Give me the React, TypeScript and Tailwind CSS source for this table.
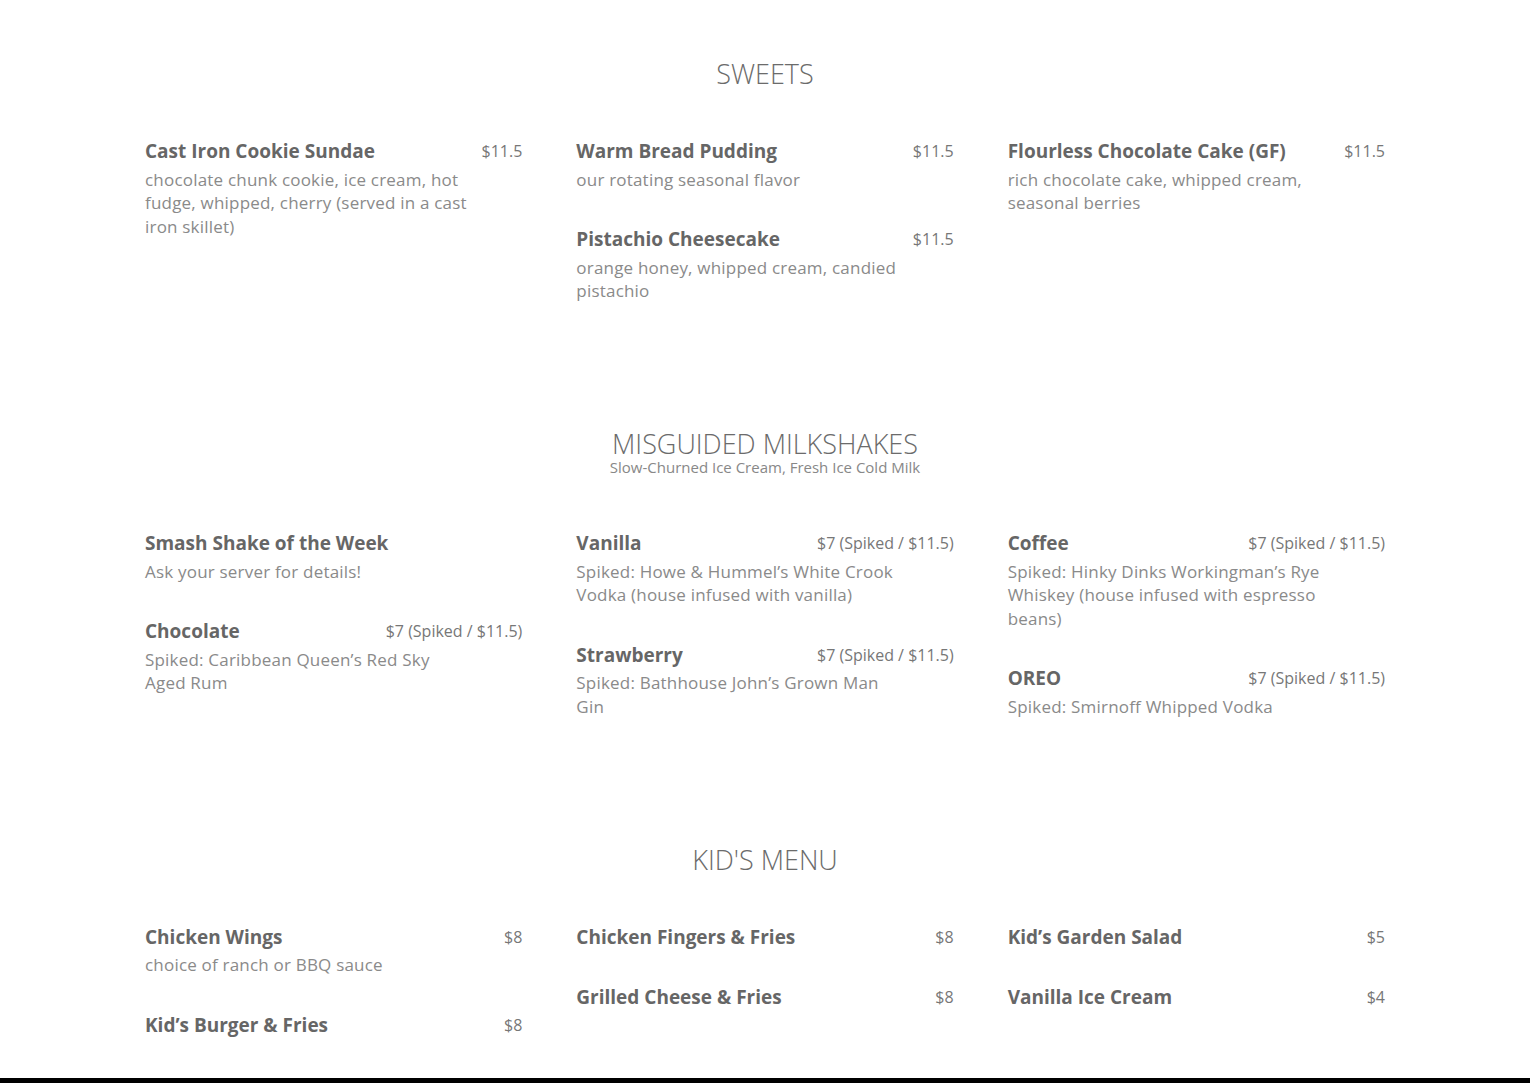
type Item = { name: string; price?: string; desc?: string };
type Section = { title: string; subtitle?: string; columns: Item[][] };

const sections: Section[] = [
  {
    title: 'SWEETS',
    columns: [
      [
        {
          name: 'Cast Iron Cookie Sundae',
          price: '$11.5',
          desc: 'chocolate chunk cookie, ice cream, hot fudge, whipped, cherry (served in a cast iron skillet)',
        },
      ],
      [
        { name: 'Warm Bread Pudding', price: '$11.5', desc: 'our rotating seasonal flavor' },
        { name: 'Pistachio Cheesecake', price: '$11.5', desc: 'orange honey, whipped cream, candied pistachio' },
      ],
      [
        {
          name: 'Flourless Chocolate Cake (GF)',
          price: '$11.5',
          desc: 'rich chocolate cake, whipped cream, seasonal berries',
        },
      ],
    ],
  },
  {
    title: 'MISGUIDED MILKSHAKES',
    subtitle: 'Slow-Churned Ice Cream, Fresh Ice Cold Milk',
    columns: [
      [
        { name: 'Smash Shake of the Week', desc: 'Ask your server for details!' },
        { name: 'Chocolate', price: '$7 (Spiked / $11.5)', desc: 'Spiked: Caribbean Queen’s Red Sky Aged Rum' },
      ],
      [
        {
          name: 'Vanilla',
          price: '$7 (Spiked / $11.5)',
          desc: 'Spiked: Howe & Hummel’s White Crook Vodka (house infused with vanilla)',
        },
        { name: 'Strawberry', price: '$7 (Spiked / $11.5)', desc: 'Spiked: Bathhouse John’s Grown Man Gin' },
      ],
      [
        {
          name: 'Coffee',
          price: '$7 (Spiked / $11.5)',
          desc: 'Spiked: Hinky Dinks Workingman’s Rye Whiskey (house infused with espresso beans)',
        },
        { name: 'OREO', price: '$7 (Spiked / $11.5)', desc: 'Spiked: Smirnoff Whipped Vodka' },
      ],
    ],
  },
  {
    title: "KID'S MENU",
    columns: [
      [
        { name: 'Chicken Wings', price: '$8', desc: 'choice of ranch or BBQ sauce' },
        { name: 'Kid’s Burger & Fries', price: '$8' },
      ],
      [
        { name: 'Chicken Fingers & Fries', price: '$8' },
        { name: 'Grilled Cheese & Fries', price: '$8' },
      ],
      [
        { name: 'Kid’s Garden Salad', price: '$5' },
        { name: 'Vanilla Ice Cream', price: '$4' },
      ],
    ],
  },
];

function MenuItem({ item }: { item: Item }) {
  return (
    <div className="mb-8">
      <div className="flex items-start justify-between gap-4">
        <h3 className="text-[19px] leading-[28px] font-bold text-[#666666]">{item.name}</h3>
        {item.price && <span className="text-[16px] leading-[28px] text-[#777777] whitespace-nowrap">{item.price}</span>}
      </div>
      {item.desc && (
        <p className="mt-[2.5px] pb-[2px] w-[86%] text-[17px] leading-[23.5px] tracking-[0.2px] text-[#8a8a8a]">
          {item.desc}
        </p>
      )}
    </div>
  );
}

export default function App() {
  return (
    <div className="min-h-screen bg-white font-['Open_Sans','Lato',sans-serif]">
      {sections.map((section, i) => (
        <section
          key={section.title}
          className={`pt-[59px] ${i === sections.length - 1 ? 'pb-[7px]' : 'pb-[33.5px]'}`}
        >
          <div className={`text-center ${section.subtitle ? 'mb-[53px]' : 'mb-[48px]'}`}>
            <h2 className="text-[27px] leading-[30px] font-light text-[#6b6b6b]">{section.title}</h2>
            {section.subtitle && (
              <p className="text-[15px] leading-[17px] text-[#888888]">{section.subtitle}</p>
            )}
          </div>
          <div className="mx-auto grid w-[1240px] grid-cols-3 gap-x-[54px]">
            {section.columns.map((col, ci) => (
              <div key={ci}>
                {col.map((item) => (
                  <MenuItem key={item.name} item={item} />
                ))}
              </div>
            ))}
          </div>
        </section>
      ))}
      <footer className="h-[120px] bg-black" />
    </div>
  );
}
